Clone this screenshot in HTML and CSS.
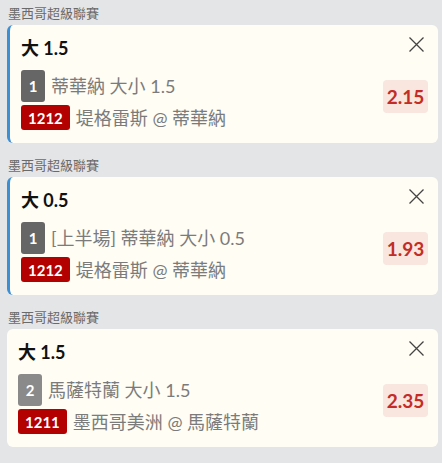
FILE: index.html
```html
<!DOCTYPE html>
<html lang="zh-Hant">
<head>
    <meta charset="UTF-8">
    <meta name="viewport" content="width=device-width, initial-scale=1.0">
    <title>投注單</title>
    <link rel="stylesheet" href="styles.css">
</head>
<body>
    <div class="slip">
        <div class="group">
            <div class="league">墨西哥超級聯賽</div>
            <div class="bet bet-active">
                <div class="bet-title">大 1.5</div>
                <button class="close" type="button" aria-label="移除">
                    <svg width="15" height="15" viewBox="0 0 15 15"><path d="M0.5 0.5L14.5 14.5M14.5 0.5L0.5 14.5" stroke="#444" stroke-width="1.3" fill="none"/></svg>
                </button>
                <div class="bet-body">
                    <div class="bet-lines">
                        <div class="line">
                            <span class="num">1</span>
                            <span class="text">蒂華納 大小 1.5</span>
                        </div>
                        <div class="line">
                            <span class="code">1212</span>
                            <span class="text">堤格雷斯 @ 蒂華納</span>
                        </div>
                    </div>
                    <div class="odds">2.15</div>
                </div>
            </div>
        </div>

        <div class="group">
            <div class="league">墨西哥超級聯賽</div>
            <div class="bet bet-active">
                <div class="bet-title">大 0.5</div>
                <button class="close" type="button" aria-label="移除">
                    <svg width="15" height="15" viewBox="0 0 15 15"><path d="M0.5 0.5L14.5 14.5M14.5 0.5L0.5 14.5" stroke="#444" stroke-width="1.3" fill="none"/></svg>
                </button>
                <div class="bet-body">
                    <div class="bet-lines">
                        <div class="line">
                            <span class="num">1</span>
                            <span class="text">[上半場] 蒂華納 大小 0.5</span>
                        </div>
                        <div class="line">
                            <span class="code">1212</span>
                            <span class="text">堤格雷斯 @ 蒂華納</span>
                        </div>
                    </div>
                    <div class="odds">1.93</div>
                </div>
            </div>
        </div>

        <div class="group">
            <div class="league">墨西哥超級聯賽</div>
            <div class="bet">
                <div class="bet-title">大 1.5</div>
                <button class="close" type="button" aria-label="移除">
                    <svg width="15" height="15" viewBox="0 0 15 15"><path d="M0.5 0.5L14.5 14.5M14.5 0.5L0.5 14.5" stroke="#444" stroke-width="1.3" fill="none"/></svg>
                </button>
                <div class="bet-body">
                    <div class="bet-lines">
                        <div class="line">
                            <span class="num num-light">2</span>
                            <span class="text">馬薩特蘭 大小 1.5</span>
                        </div>
                        <div class="line">
                            <span class="code">1211</span>
                            <span class="text">墨西哥美洲 @ 馬薩特蘭</span>
                        </div>
                    </div>
                    <div class="odds">2.35</div>
                </div>
            </div>
        </div>
    </div>
</body>
</html>
```

FILE: styles.css
```css
body {
    font-family: Lato, "Noto Sans CJK TC", sans-serif;
    margin: 0;
    padding: 0;
    background-color: #e4e5e7;
}
.slip {
    padding: 0 4px 0 7px;
}
.group {
    margin-bottom: 9px;
}
.league {
    font-size: 13px;
    height: 16px;
    line-height: 16px;
    color: #6a6a6a;
    padding: 5px 0 4px 1px;
}
.bet {
    position: relative;
    background-color: #fffdf4;
    border-radius: 6px;
    padding: 11px 10px 13px 11px;
}
.bet-active {
    border-left: 3px solid #3b8fd6;
}
.bet-title {
    font-size: 18px;
    height: 24px;
    line-height: 24px;
    font-weight: bold;
    color: #111;
}
.close {
    position: absolute;
    top: 12px;
    right: 14px;
    padding: 0;
    border: none;
    background: none;
    width: 15px;
    height: 15px;
    cursor: pointer;
}
.close svg {
    display: block;
}
.bet-body {
    display: flex;
    justify-content: space-between;
    align-items: flex-start;
    margin-top: 10px;
}
.bet-lines {
    display: flex;
    flex-direction: column;
    gap: 3px;
}
.line {
    display: flex;
    align-items: center;
    gap: 6px;
}
.text {
    font-size: 18px;
    line-height: 24px;
    color: #7b7b7b;
    white-space: nowrap;
}
.num {
    width: 24px;
    height: 32px;
    border-radius: 3px;
    background-color: #666;
    color: #fff;
    font-weight: bold;
    font-size: 15px;
    display: flex;
    align-items: center;
    justify-content: center;
}
.num-light {
    background-color: #8a8a8a;
}
.code {
    height: 25px;
    padding: 0 7px;
    border-radius: 3px;
    background-color: #b30000;
    color: #fff;
    font-weight: bold;
    font-size: 15px;
    display: flex;
    align-items: center;
}
.odds {
    margin-top: 10px;
    width: 45px;
    height: 33px;
    border-radius: 4px;
    background-color: #f8e6df;
    color: #c42c26;
    font-weight: bold;
    font-size: 19px;
    display: flex;
    align-items: center;
    justify-content: center;
}
```
